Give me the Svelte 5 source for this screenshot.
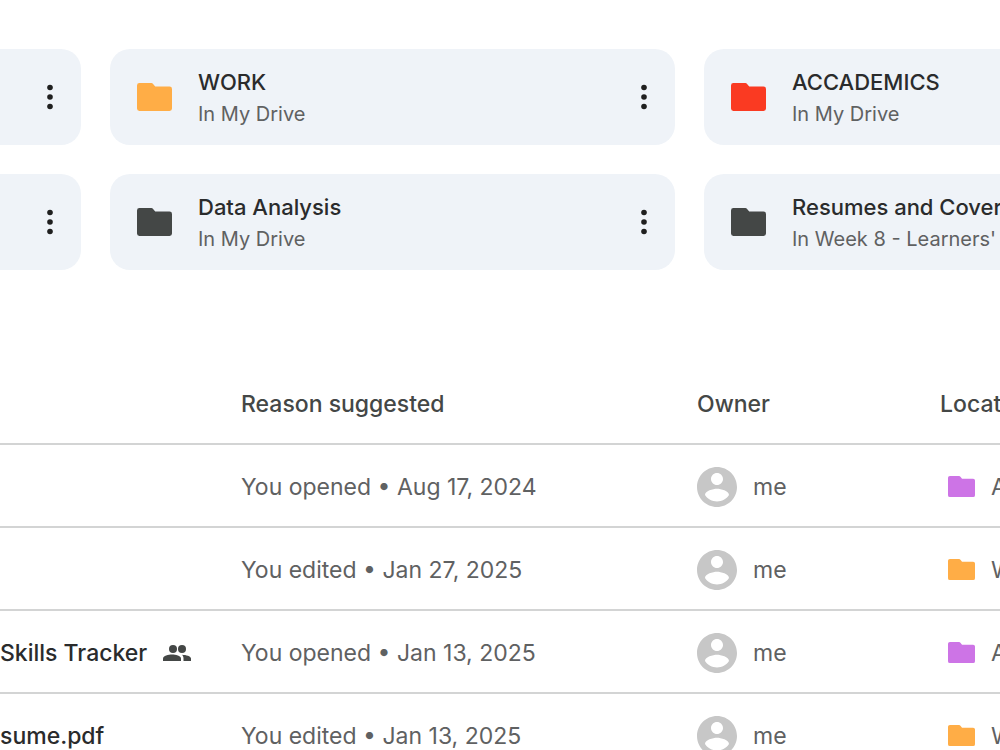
<script lang="ts">
	type Folder = {
		name: string;
		place: string;
		color: string;
	};

	type FileRow = {
		name: string;
		shared?: boolean;
		reason: string;
		owner: string;
		location: string;
		color: string;
	};

	const DARK = '#444746';
	const ORANGE = '#ffad46';
	const RED = '#fa3a22';
	const PURPLE = '#cd74e6';

	// one entry per grid row: the middle and the right card
	const folderRows: Folder[][] = [
		[
			{ name: 'WORK', place: 'In My Drive', color: ORANGE },
			{ name: 'ACCADEMICS', place: 'In My Drive', color: RED },
		],
		[
			{ name: 'Data Analysis', place: 'In My Drive', color: DARK },
			{ name: 'Resumes and Cover', place: "In Week 8 - Learners'", color: DARK },
		],
	];

	const files: FileRow[] = [
		{ name: '', reason: 'You opened • Aug 17, 2024', owner: 'me', location: 'A', color: PURPLE },
		{ name: '', reason: 'You edited • Jan 27, 2025', owner: 'me', location: 'W', color: ORANGE },
		{ name: 'Skills Tracker', shared: true, reason: 'You opened • Jan 13, 2025', owner: 'me', location: 'A', color: PURPLE },
		{ name: 'sume.pdf', reason: 'You edited • Jan 13, 2025', owner: 'me', location: 'W', color: ORANGE },
	];
</script>

{#snippet folderIcon(color: string)}
	<svg class="folder-icon" viewBox="0 0 20 16" fill={color} preserveAspectRatio="none" aria-hidden="true">
		<path d="M1.4 0H8.2Q8.8 0 9.2.5L10.4 2H18.6Q20 2 20 3.4V14.6Q20 16 18.6 16H1.4Q0 16 0 14.6V1.4Q0 0 1.4 0Z" />
	</svg>
{/snippet}

{#snippet moreButton(label: string)}
	<button class="more" type="button" aria-label={label}>
		<svg viewBox="0 0 8 26" aria-hidden="true">
			<circle cx="4" cy="3.5" r="2.8" />
			<circle cx="4" cy="13" r="2.8" />
			<circle cx="4" cy="22.5" r="2.8" />
		</svg>
	</button>
{/snippet}

<main class="drive">
	<section class="folders" aria-label="Suggested folders">
		{#each folderRows as row}
			<article class="card first">
				{@render moreButton('More actions')}
			</article>
			{#each row as folder, i}
				<article class="card" class:last={i === 1}>
					{@render folderIcon(folder.color)}
					<div class="meta">
						<h3>{folder.name}</h3>
						<p>{folder.place}</p>
					</div>
					{#if i === 0}
						{@render moreButton(`More actions for ${folder.name}`)}
					{/if}
				</article>
			{/each}
		{/each}
	</section>

	<table class="files">
		<colgroup>
			<col class="col-name" />
			<col />
			<col class="col-owner" />
			<col class="col-location" />
		</colgroup>
		<thead>
			<tr>
				<th aria-label="Name"></th>
				<th>Reason suggested</th>
				<th>Owner</th>
				<th>Location</th>
			</tr>
		</thead>
		<tbody>
			{#each files as file}
				<tr>
					<td class="name">
						<div class="cell">
							{file.name}
							{#if file.shared}
								<svg class="people" viewBox="0 0 28 16" role="img" aria-label="Shared">
									<circle cx="10" cy="4" r="4" />
									<path d="M0 16V13.5C0 10.7 5.5 9.5 9 9.5S18 10.7 18 13.5V16Z" />
									<circle cx="19" cy="4" r="4" />
									<path d="M19 9.7C23 10 28 11 28 13.5V16H20.5V13.5C20.5 11.8 20 10.8 19 9.7Z" />
								</svg>
							{/if}
						</div>
					</td>
					<td>{file.reason}</td>
					<td>
						<div class="cell">
							<svg class="avatar" viewBox="2 2 20 20" aria-hidden="true">
								<path d="M12 2C6.48 2 2 6.48 2 12s4.48 10 10 10 10-4.48 10-10S17.52 2 12 2zm0 3c1.66 0 3 1.34 3 3s-1.34 3-3 3-3-1.34-3-3 1.34-3 3-3zm0 14.2c-2.5 0-4.71-1.28-6-3.22.03-1.99 4-3.08 6-3.08 1.99 0 5.97 1.09 6 3.08-1.29 1.94-3.5 3.22-6 3.22z" />
							</svg>
							{file.owner}
						</div>
					</td>
					<td class="location">
						<div class="cell">
							{@render folderIcon(file.color)}
							{file.location}
						</div>
					</td>
				</tr>
			{/each}
		</tbody>
	</table>
</main>

<style>
	:global(body) {
		margin: 0;
		background: #fff;
		overflow: hidden;
	}

	.drive {
		padding-top: 49px;
		overflow: hidden;
		color: #2a2b2c;
		font-family: Inter, Roboto, sans-serif;
	}

	/* Folder cards */
	.folders {
		display: grid;
		grid-template-columns: 81fr 565fr 296fr;
		gap: 29px;
	}
	.card {
		display: flex;
		align-items: center;
		gap: 26px;
		box-sizing: border-box;
		height: 96px;
		min-width: 0;
		padding: 0 27px;
		border-radius: 20px;
		background: #eff3f8;
		overflow: hidden;
		white-space: nowrap;
	}
	.card.first { border-radius: 0 20px 20px 0; }
	.card.last {
		padding-right: 0;
		border-radius: 20px 0 0 20px;
	}
	.folder-icon {
		flex: none;
		width: 35px;
		height: 28px;
	}
	.meta { padding-top: 2px; }
	.meta h3 {
		margin: 0;
		font-size: 22px;
		line-height: 32px;
		font-weight: 450;
	}
	.meta p {
		margin: 0;
		color: #5f6162;
		font-size: 20px;
		line-height: 32px;
	}
	.more {
		display: flex;
		margin-left: auto;
		padding: 0;
		border: none;
		background: none;
		cursor: pointer;
	}
	.more svg {
		width: 8px;
		height: 26px;
		fill: #1f1f1f;
	}

	/* File list */
	.files {
		width: 100%;
		margin-top: 93px;
		table-layout: fixed;
		border-collapse: collapse;
		white-space: nowrap;
		text-align: left;
		font-size: 23px;
		line-height: 32px;
	}
	.col-name { width: 241px; }
	.col-owner { width: 243px; }
	.col-location { width: 60px; }
	th, td {
		box-sizing: border-box;
		height: 83px;
		padding: 2px 0 0;
		border-bottom: 2px solid #d3d4d4;
	}
	th {
		height: 81px;
		color: #444746;
		font-weight: 500;
	}
	td { color: #5f6162; }
	.name {
		color: #2a2b2c;
		font-weight: 500;
	}
	.cell {
		display: flex;
		align-items: center;
		gap: 16px;
	}
	.location { padding-left: 8px; }
	.location .folder-icon {
		width: 27px;
		height: 21px;
	}
	.avatar {
		width: 40px;
		height: 40px;
		fill: #c7c7c7;
	}
	.people {
		width: 28px;
		height: 16px;
		fill: #444746;
	}
</style>
